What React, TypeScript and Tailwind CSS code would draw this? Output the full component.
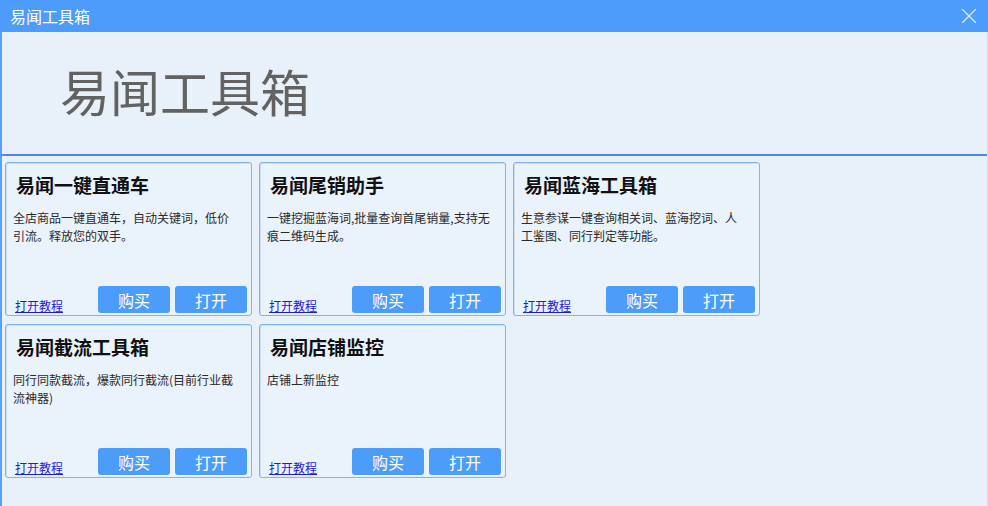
import { X } from "lucide-react";

type Tool = {
  name: string;
  lines: string[];
};

const tools: Tool[] = [
  { name: "易闻一键直通车", lines: ["全店商品一键直通车，自动关键词，低价", "引流。释放您的双手。"] },
  { name: "易闻尾销助手", lines: ["一键挖掘蓝海词,批量查询首尾销量,支持无", "痕二维码生成。"] },
  { name: "易闻蓝海工具箱", lines: ["生意参谋一键查询相关词、蓝海挖词、人", "工鉴图、同行判定等功能。"] },
  { name: "易闻截流工具箱", lines: ["同行同款截流，爆款同行截流(目前行业截", "流神器)"] },
  { name: "易闻店铺监控", lines: ["店铺上新监控"] },
];

const font = "font-['Microsoft_YaHei','Noto_Sans_CJK_SC',sans-serif]";

function ToolCard({ tool }: { tool: Tool }) {
  return (
    <div className="flex flex-col h-[154px] rounded-[3px] border border-[#7fb5ea] bg-[#eaf2fb] shadow-[inset_1px_1px_0_#c9dcf0]">
      <h2 className="pl-[10px] pt-[9px] text-[19px] leading-[26px] font-bold text-[#111]">{tool.name}</h2>
      <p className="pl-[7px] pt-[11px] text-[12px] leading-[18px] text-[#2a2a2a]">
        {tool.lines.map((l, i) => (
          <span key={i} className="block whitespace-nowrap">
            {l}
          </span>
        ))}
      </p>
      <div className="mt-auto flex items-end pl-[9px] pr-[4px] pb-[2px]">
        <a href="#" className="grow text-[12px] leading-[14px] text-[#1a1aee] underline">
          打开教程
        </a>
        <div className="flex gap-[5px]">
          <button className="w-[72px] h-[27px] rounded-[3px] bg-[#4c9dfa] text-[16px] text-white">购买</button>
          <button className="w-[72px] h-[27px] rounded-[3px] bg-[#4c9dfa] text-[16px] text-white">打开</button>
        </div>
      </div>
    </div>
  );
}

export default function App() {
  return (
    <div className={`h-[506px] w-[988px] flex flex-col overflow-hidden bg-[#e8f0fa] ${font}`}>
      <div className="h-8 shrink-0 flex items-center justify-between bg-[#4d9cfb] pl-[10px] pr-[6px]">
        <span className="text-[16px] text-white">易闻工具箱</span>
        <X size={26} strokeWidth={1} className="text-[#e2eeff]" />
      </div>
      <div className="flex grow flex-col border-l-2 border-r border-l-[#5a9ff0] border-r-[#d0dff0]">
        <div className="h-[124px] shrink-0 flex items-center pl-[58px] pb-[6px] border-b-2 border-[#4f88e0]">
          <h1 className="text-[50px] leading-none text-[#626262] font-['Noto_Sans_CJK_SC',sans-serif]">
            易闻工具箱
          </h1>
        </div>
        <div className="grid grid-cols-[247px_247px_247px] gap-x-[7px] gap-y-[8px] pl-[3px] pt-[6px]">
          {tools.map((t) => (
            <ToolCard key={t.name} tool={t} />
          ))}
        </div>
      </div>
    </div>
  );
}
